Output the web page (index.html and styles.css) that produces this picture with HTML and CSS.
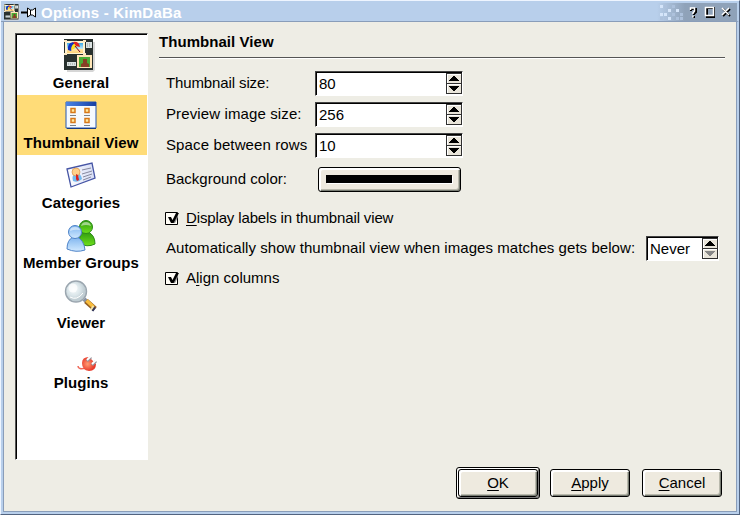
FILE: index.html
```html
<!DOCTYPE html>
<html lang="en">
<head>
<meta charset="utf-8">
<title>Options - KimDaBa</title>
<link rel="stylesheet" href="styles.css">
</head>
<body>
<svg width="0" height="0" class="defs" aria-hidden="true">
  <defs>
    <linearGradient id="sky" x2="0" y2="1"><stop stop-color="#3ba9ea"/><stop offset=".6" stop-color="#c9edf5"/><stop offset=".65" stop-color="#ffe3a0"/><stop offset="1" stop-color="#ffd27a"/></linearGradient>
    <linearGradient id="bar" x2="1"><stop stop-color="#4a84e6"/><stop offset="1" stop-color="#1740a4"/></linearGradient>
    <linearGradient id="blue" x2="0" y2="1"><stop stop-color="#7fb5ef"/><stop offset="1" stop-color="#d0e9ff"/></linearGradient>
    <linearGradient id="green" x2="0" y2="1"><stop stop-color="#2f9a10"/><stop offset="1" stop-color="#6fe01c"/></linearGradient>
    <radialGradient id="lens" cx=".4" cy=".4"><stop stop-color="#f7fbfc"/><stop offset=".6" stop-color="#dbe6ea"/><stop offset="1" stop-color="#c0cdd3"/></radialGradient>
    <radialGradient id="red" cx=".4" cy=".5"><stop stop-color="#ff9b72"/><stop offset="1" stop-color="#e83a2b"/></radialGradient>
    <linearGradient id="card" x2="1"><stop stop-color="#fff"/><stop offset="1" stop-color="#d5dcf5"/></linearGradient>
    <symbol id="album" viewBox="0 0 34 34">
      <path d="M3 3h28v28l-2 2H3z" fill="#d6d6d6"/>
      <path d="M0 0h29v31H0z" fill="#29312f"/>
      <path d="M1 2h20v13H1z" fill="#fff3d0"/><path d="M3 4h16v10H3z" fill="url(#sky)"/>
      <path d="M4 11q-1-7 5-8l2 1-4 8z" fill="#1230c0"/><path d="M7 11q0-5 4-7l3 2-4 4z" fill="#ffdf20"/><path d="M9 3q6-1 7 5l-4-1z" fill="#e02020"/><path d="M11 7l5 6" stroke="#702" stroke-width="1"/>
      <path d="M22 3h6v6h-6zM3 23h9v4H3z" fill="#dce3e3"/><path d="M23 5h4M23 7h4M4 25h7" stroke="#8b9696" stroke-dasharray="1"/>
      <path d="M13 16h15v13H13z" fill="#ffe6b8"/><path d="M15 18h11v10H15z" fill="#49ad35"/><path d="M17 28v-3l2-1v-4h4v4l2 1v3z" fill="#873f25"/>
      <path d="M0 1h3v2H0zM19 1h3v2h-3zM0 14h3v2H0zM19 14h3v2h-3z" fill="#f9e6c2"/>
    </symbol>
    <symbol id="spin" viewBox="0 0 16 21">
      <path d="M0 0h16v21H0z" fill="#303030"/>
      <path d="M1 1h14v9H1zM1 11h14v9H1z" fill="#fff"/>
      <path d="M2 2h13v8H2zM2 12h13v8H2z" fill="#e9e5da"/>
      <path d="M7 3h2v1h1v1h1v1h1v1h1v1H3V7h1V6h1V5h1V4h1z" fill="#000"/>
      <path d="M3 13h10v1h-1v1h-1v1h-1v1H9v1H7v-1H6v-1H5v-1H4v-1H3z"/>
    </symbol>
    <symbol id="checkbox" viewBox="0 0 15 14">
      <path d="M.5 1.500h12v12H.5z" fill="#fffdf6" stroke="#000"/><path d="M7 12l6-10v4l-3 6z" fill="#888"/><path d="M3 6h3l1.500 3L11 2h3L8.500 12H6z"/>
    </symbol>
  </defs>
</svg>
<div class="window">
  <header class="titlebar">
    <svg class="app-icon" width="17" height="17"><use href="#album"/></svg>
    <svg class="pin" width="15" height="11" viewBox="0 0 15 11" fill="none" stroke="#000"><path d="M0 5.500h6" stroke-width="2"/><path d="M6.500 1v9l3-2h2l3 2V1l-3 2h-2z" fill="#fff"/><path d="M9.500 3v5"/></svg>
    <h1>Options - KimDaBa</h1>
    <svg class="dither" width="28" height="19" viewBox="0 0 28 19">
      <path d="M2 2h3v3H2zM2 10h3v3H2zM6 10h3v3H6zM10 6h3v3h-3zM18 6h3v3h-3zM10 14h3v3h-3z" fill="#d5e5fa"/>
      <path d="M6 2h3v3H6zM14 2h3v3h-3zM2 14h3v3H2zM6 14h3v3H6zM14 10h3v3h-3zM18 14h3v3h-3zM22 10h3v3h-3zM22 14h3v3h-3z" fill="#adc1dc"/>
    </svg>
    <svg class="controls" width="50" height="19" viewBox="0 0 50 19" fill="none">
      <g stroke="#000" stroke-width="2"><path d="M4 8V6h5v3L7 11v1M7 13v2M20 5h7v9h-7zM36 6l7 7M43 6l-7 7"/></g>
      <g stroke="#fff" stroke-width="1.500"><path d="M3.500 7V5h4v3L6 10v1M6 12.500v2M18.500 4.500h8v8h-8zM35 5l7 7M42 5l-7 7"/></g>
    </svg>
  </header>
  <main class="body">
    <nav class="sidebar">
      <div class="item"><svg width="34" height="34"><use href="#album"/></svg><span>General</span></div>
      <div class="item selected">
        <svg width="32" height="34" viewBox="0 0 32 34"><path d="M1 3h30v26H1z" fill="#f5faff" stroke="#2456b2"/><path d="M1 3h30v4H1z" fill="url(#bar)"/><path d="M2 29.500h29" stroke="#173b83"/>
          <g fill="#ffe9a0" stroke="#d87818" stroke-width="1.500"><path d="M6 9.500h4v4H6zM20 9.500h4v4h-4zM6 19.500h4v4H6zM20 19.500h4v4h-4z"/></g><path d="M5 16.500h6M19 16.500h6M5 26.500h6M19 26.500h6" stroke="#7c8288"/></svg>
        <span>Thumbnail View</span></div>
      <div class="item">
        <svg width="32" height="34" viewBox="0 0 32 34"><path d="M2 10L27 4l3 15L6 28z" fill="url(#card)" stroke="#4655a5" stroke-width="1.300"/><path d="M17 11l9-2M17 15l10-3M18 18l9-3M18 21l8-3" stroke="#87899f"/><path d="M8 22q-2-6 3-7 5-1 6 5-4 4-9 2z" fill="#74b9ee"/><circle cx="11" cy="13" r="4" fill="#ffd08a" stroke="#d38a3d" stroke-width=".6"/><path d="M11 15l2 1 1 5-2 1-1-2z" fill="#d62222"/></svg>
        <span>Categories</span></div>
      <div class="item">
        <svg width="32" height="34" viewBox="0 0 32 34"><g fill="url(#green)" stroke="#2c8b18"><path d="M14 24q0-9 5-11h4q7 3 7 12-8 4-16-1z"/><circle cx="21" cy="8" r="6.500"/></g><g fill="url(#blue)" stroke="#4e83c8"><path d="M2 30q0-9 6-12h4q7 3 8 13-9 3-18-1z"/><circle cx="10" cy="13" r="6.500"/></g><path d="M5 12q0-4 5-4 4 0 5 3-5-1-10 1M16 7q1-4 5-4 4 0 5 4-5-2-10 0" fill="#fff" opacity=".5"/></svg>
        <span>Member Groups</span></div>
      <div class="item">
        <svg width="34" height="34" viewBox="0 0 34 34"><path d="M20 20l2.500 2.500" stroke="#8b93a0" stroke-width="4"/><path d="M22 22l9 8" stroke="#946025" stroke-width="5.500"/><path d="M22.500 21.500l7 6.500" stroke="#f9bd3c" stroke-width="3.500"/><path d="M29.500 27l-2.500 4" stroke="#eee2ad" stroke-width="2"/><path d="M31 28.500l-2.500 3.500" stroke="#32375f" stroke-width="2"/><circle cx="12" cy="12.500" r="10.500" fill="url(#lens)" stroke="#9ba6af" stroke-width="1.400"/><circle cx="9" cy="9" r="4.500" fill="#fff" opacity=".75"/><path d="M6 18q7 4 13-4" stroke="#fff" fill="none"/></svg>
        <span>Viewer</span></div>
      <div class="item">
        <svg width="34" height="34" viewBox="0 0 34 34"><path d="M14 27q0 4 8 2" fill="none" stroke="#f06757" stroke-width="1.500"/><path d="M18 24q0-6 7-6l7 7q0 7-7 7-7-1-7-8z" fill="url(#red)"/><path d="M23 22l4-4M28 26l4-4" stroke="#98939b" stroke-width="3"/><path d="M23 21l4-4M28 25l4-4" stroke="#fff" stroke-width="1.800"/></svg>
        <span>Plugins</span></div>
    </nav>
    <section class="page">
      <h2>Thumbnail View</h2>
      <div class="form">
        <span class="label tight">Thumbnail size:</span><div class="spinbox"><span>80</span><svg width="16" height="21"><use href="#spin"/></svg></div>
        <span class="label wide">Preview image size:</span><div class="spinbox"><span>256</span><svg width="16" height="21"><use href="#spin"/></svg></div>
        <span class="label wide">Space between rows</span><div class="spinbox"><span>10</span><svg width="16" height="21"><use href="#spin"/></svg></div>
      </div>
      <div class="color-row"><span class="label">Background color:</span><button class="color"><i></i></button></div>
      <label class="check"><svg width="15" height="14"><use href="#checkbox"/></svg><span class="display"><u>D</u>isplay labels in thumbnail view</span></label>
      <div class="auto"><span class="auto-label">Automatically show thumbnail view when images matches gets below:</span><div class="spinbox never"><span>Never</span><svg width="16" height="21"><use href="#spin"/></svg></div></div>
      <label class="check"><svg width="15" height="14"><use href="#checkbox"/></svg><span>A<u>l</u>ign columns</span></label>
    </section>
  </main>
  <footer class="actions">
    <div class="default"><button class="btn"><span><u>O</u>K</span></button></div>
    <button class="btn apply"><span><u>A</u>pply</span></button>
    <button class="btn"><span><u>C</u>ancel</span></button>
  </footer>
</div>
</body>
</html>
```
FILE: styles.css
```css
* { box-sizing: border-box; }
body { margin: 0; font: 15px/18px "Liberation Sans", Arial, sans-serif; color: #000; overflow: hidden; }
.defs { position: absolute; }
svg { display: block; flex: none; }
u { text-decoration-thickness: 1px; text-underline-offset: 2px; text-decoration-skip-ink: none; }

.window { width: 740px; height: 515px; display: flex; flex-direction: column; background: #eeede5; border: 1px solid #526480; border-top-color: #eef5ff; border-left-color: #eef5ff; box-shadow: inset 0 0 0 2px #b8cfeb, inset 0 0 0 3px #899db9; }
.titlebar { height: 21px; flex: none; display: flex; align-items: center; padding-left: 3px; background: linear-gradient(90deg, #b8cfeb 656px, #8fa2b9 684px); border-bottom: 1px solid #899db9; border-top: 2px solid #b8cfeb; border-right: 2px solid #b8cfeb; }
.app-icon { margin-top: 1px; }
.pin { margin: 1px 0 0 0; }
.titlebar h1 { margin: 1px 0 0 5px; font-size: 15px; line-height: 18px; color: #fff; letter-spacing: .23px; }
.dither { margin-left: auto; }
.controls { margin: 1px 0 0 1px; }

.body { display: flex; height: 438px; padding: 11px 14px 0 14px; }
.sidebar { width: 133px; height: 427px; flex: none; background: #fff; border: 1px solid #fff; border-top-color: #555; border-left-color: #555; box-shadow: inset 1px 1px #000; padding: 1px 0 0 1px; }
.item { height: 60px; display: flex; flex-direction: column; align-items: center; padding: 4px 2px 0 0; font-weight: bold; letter-spacing: .08px; white-space: nowrap; }
.item span { margin-top: 1px; }
.selected { background: #ffdc78; }

.page { width: 567px; margin-left: 11px; }
.page h2 { font-size: 15px; line-height: 18px; margin: 0; height: 25px; border-bottom: 1px solid #555; box-shadow: 0 1px #fff; letter-spacing: .05px; }
.form { display: grid; grid-template-columns: 149px 148px; row-gap: 6px; align-items: center; padding: 13px 0 0 7px; }
.label { margin-top: -2px; }
.tight { letter-spacing: -.12px; }
.wide { letter-spacing: .12px; }
.spinbox { width: 148px; height: 25px; display: flex; justify-content: space-between; background: #fff; border: 1px solid #fff; border-top-color: #444; border-left-color: #444; box-shadow: inset 1px 1px #000; padding: 1px 0 0 3px; }
.spinbox span { margin-top: 2px; }
.spinbox svg { fill: #000; }
.color-row { display: flex; align-items: center; padding-left: 7px; margin-top: 9px; height: 25px; }
.color-row .label { width: 152px; }
button { font: inherit; color: inherit; padding: 0; border: 1px solid #000; border-radius: 3px; background: #eeeadf; box-shadow: inset 1px 1px #fff, inset 2px 2px #fff, inset -1px -1px #777b72, inset -2px -2px #b9b9ac; }
.color { width: 143px; height: 25px; display: flex; align-items: center; justify-content: center; padding: 0 2px 2px 0; }
.color i { width: 126px; height: 8px; background: #000; box-shadow: 1px 1px #fff; }
.check { display: flex; align-items: center; height: 18px; padding-left: 6px; margin-top: 17px; }
.check span { margin-left: 6px; }
.display { letter-spacing: -.14px; }
.auto { display: flex; align-items: center; justify-content: space-between; height: 25px; margin-top: 9px; padding: 0 6px 0 7px; white-space: nowrap; }
.auto-label { letter-spacing: .06px; margin-top: -1px; }
.never { width: 73px; }
.never svg { fill: #888; }
.auto + .check { margin-top: 8px; }

.actions { display: flex; justify-content: flex-end; align-items: center; padding: 7px 17px 0 0; }
.btn { width: 80px; height: 28px; }
.default { border: 1px solid #000; border-radius: 3px; padding: 1px; box-shadow: inset 1px 1px #fff, inset -1px -1px #777; height: 32px; width: 84px; margin-right: 10px; }
.apply { margin-right: 12px; }
```
